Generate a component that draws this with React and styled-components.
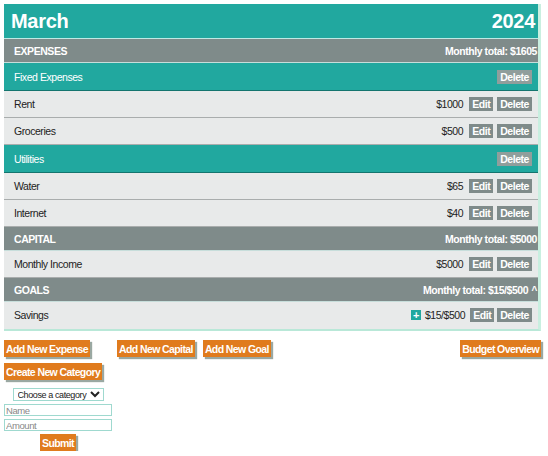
import React from 'react'
import styled, { createGlobalStyle } from 'styled-components'

const GlobalStyle = createGlobalStyle`
  body {
    margin: 4px;
    font-family: "Liberation Sans", Arial, sans-serif;
    letter-spacing: -0.45px;
    background: #fff;
  }
`

const teal = '#21a89f'
const slate = '#7f8b8a'

const budget = {
  expenses: [
    { name: 'Fixed Expenses', items: [{ name: 'Rent', amount: 1000 }, { name: 'Groceries', amount: 500 }] },
    { name: 'Utilities', items: [{ name: 'Water', amount: 65 }, { name: 'Internet', amount: 40 }] },
  ],
}

const Board = () => {
  return (
    <Wrapper>
      <GlobalStyle />
      <Sheet>
        <TitleBar>
          <h1>March</h1>
          <h1>2024</h1>
        </TitleBar>

        <SectionBar>
          <span>EXPENSES</span>
          <span>Monthly total: $1605</span>
        </SectionBar>
        {budget.expenses.map((cat) => (
          <React.Fragment key={cat.name}>
            <CategoryBar>
              <span>{cat.name}</span>
              <SmallBtn $light>Delete</SmallBtn>
            </CategoryBar>
            {cat.items.map((item) => (
              <ItemRow key={item.name}>
                <span>{item.name}</span>
                <Actions>
                  <Amount>${item.amount}</Amount>
                  <SmallBtn>Edit</SmallBtn>
                  <SmallBtn>Delete</SmallBtn>
                </Actions>
              </ItemRow>
            ))}
          </React.Fragment>
        ))}

        <SectionBar>
          <span>CAPITAL</span>
          <span>Monthly total: $5000</span>
        </SectionBar>
        <ItemRow>
          <span>Monthly Income</span>
          <Actions>
            <Amount>$5000</Amount>
            <SmallBtn>Edit</SmallBtn>
            <SmallBtn>Delete</SmallBtn>
          </Actions>
        </ItemRow>

        <SectionBar>
          <span>GOALS</span>
          <span>
            Monthly total: $15/$500 <Caret>^</Caret>
          </span>
        </SectionBar>
        <ItemRow $last>
          <span>Savings</span>
          <Actions $tight>
            <Plus>+</Plus>
            <Amount>$15/$500</Amount>
            <SmallBtn>Edit</SmallBtn>
            <SmallBtn>Delete</SmallBtn>
          </Actions>
        </ItemRow>
      </Sheet>

      <Toolbar>
        <ActionBtn>Add New Expense</ActionBtn>
        <ActionBtn $ml={27}>Add New Capital</ActionBtn>
        <ActionBtn $ml={8}>Add New Goal</ActionBtn>
        <ActionBtn $right>Budget Overview</ActionBtn>
      </Toolbar>
      <Toolbar>
        <ActionBtn>Create New Category</ActionBtn>
      </Toolbar>

      <Form>
        <Select defaultValue=''>
          <option value=''>Choose a category</option>
        </Select>
        <Input placeholder='Name' />
        <Input placeholder='Amount' />
        <ActionBtn>Submit</ActionBtn>
      </Form>
    </Wrapper>
  )
}

const Wrapper = styled.main`
  width: 537px;
`

const Sheet = styled.section`
  display: flex;
  flex-direction: column;
  border-right: 3px solid #c9efe0;
  border-bottom: 2px solid #b9e8d8;
`

const Bar = styled.div`
  box-sizing: border-box;
  display: flex;
  justify-content: space-between;
  align-items: center;
  font-size: 10.5px;
`

const TitleBar = styled(Bar)`
  height: 35px;
  padding: 0 3px 0 7px;
  background: ${teal};
  border-bottom: 1px solid #bfe9e4;
  color: #fff;

  h1 {
    margin: 0;
    font-size: 20px;
    font-weight: bold;
    letter-spacing: -0.3px;
  }
`

const SectionBar = styled(Bar)`
  height: 24px;
  padding: 0 1px 0 10px;
  background: ${slate};
  border-bottom: 1px solid #c7dedb;
  color: #fff;
  font-weight: bold;
`

const Caret = styled.span`
  font-size: 10px;
  margin-left: 1px;
`

const CategoryBar = styled(Bar)`
  height: 28px;
  padding: 0 6px 0 10px;
  background: ${teal};
  border-bottom: 1px solid #14756f;
  color: #fff;
`

const ItemRow = styled(Bar)`
  height: 27px;
  padding: 0 6px 0 10px;
  background: #e8eaea;
  border-bottom: 1px solid ${(p) => (p.$last ? '#e8eaea' : '#a9adad')};
  color: #222;
`

const Actions = styled.div`
  display: flex;
  align-items: center;
  gap: ${(p) => (p.$tight ? '3px' : '4px')};
`

const Amount = styled.span`
  margin-right: ${(p) => (p.$tight ? '0' : '2px')};
`

const SmallBtn = styled.button`
  border: none;
  padding: 0 3px;
  height: 14px;
  line-height: 14px;
  background: ${(p) => (p.$light ? '#909e9c' : slate)};
  color: #fff;
  font-family: inherit;
  font-size: 10.5px;
  letter-spacing: -0.45px;
  font-weight: bold;
`

const Plus = styled.span`
  display: inline-flex;
  align-items: center;
  justify-content: center;
  width: 10px;
  height: 10px;
  background: ${teal};
  color: #fff;
  font-size: 11px;
  font-weight: bold;
  line-height: 1;
  margin-right: 1px;
`

const Toolbar = styled.div`
  display: flex;
  align-items: center;
  margin-top: 6px;
  &:first-of-type {
    margin-top: 9px;
  }
`

const ActionBtn = styled.button`
  border: none;
  padding: 0 2px;
  height: 17px;
  margin-left: ${(p) => (p.$right ? 'auto' : `${p.$ml || 0}px`)};
  background: #e07b1d;
  color: #fff;
  font-family: inherit;
  font-size: 10.5px;
  letter-spacing: -0.6px;
  font-weight: bold;
  box-shadow: 2px 2px 1px #9aa8a2;
  white-space: nowrap;
`

const Form = styled.form`
  width: 108px;
  display: flex;
  flex-direction: column;
  align-items: center;
  gap: 3px;
  margin-top: 8px;
`

const Select = styled.select`
  font-family: inherit;
  font-size: 9px;
  letter-spacing: -0.4px;
  height: 13px;
  padding: 0;
  border: 1px solid #9fd9cf;
  background: #fff;
  color: #222;
`

const Input = styled.input`
  box-sizing: border-box;
  width: 108px;
  height: 12px;
  padding: 0 1px;
  font-family: inherit;
  font-size: 9.5px;
  letter-spacing: -0.4px;
  border: 1px solid #9fd9cf;
  &::placeholder {
    color: #888;
  }
`

export default function App() {
  return <Board />
}
